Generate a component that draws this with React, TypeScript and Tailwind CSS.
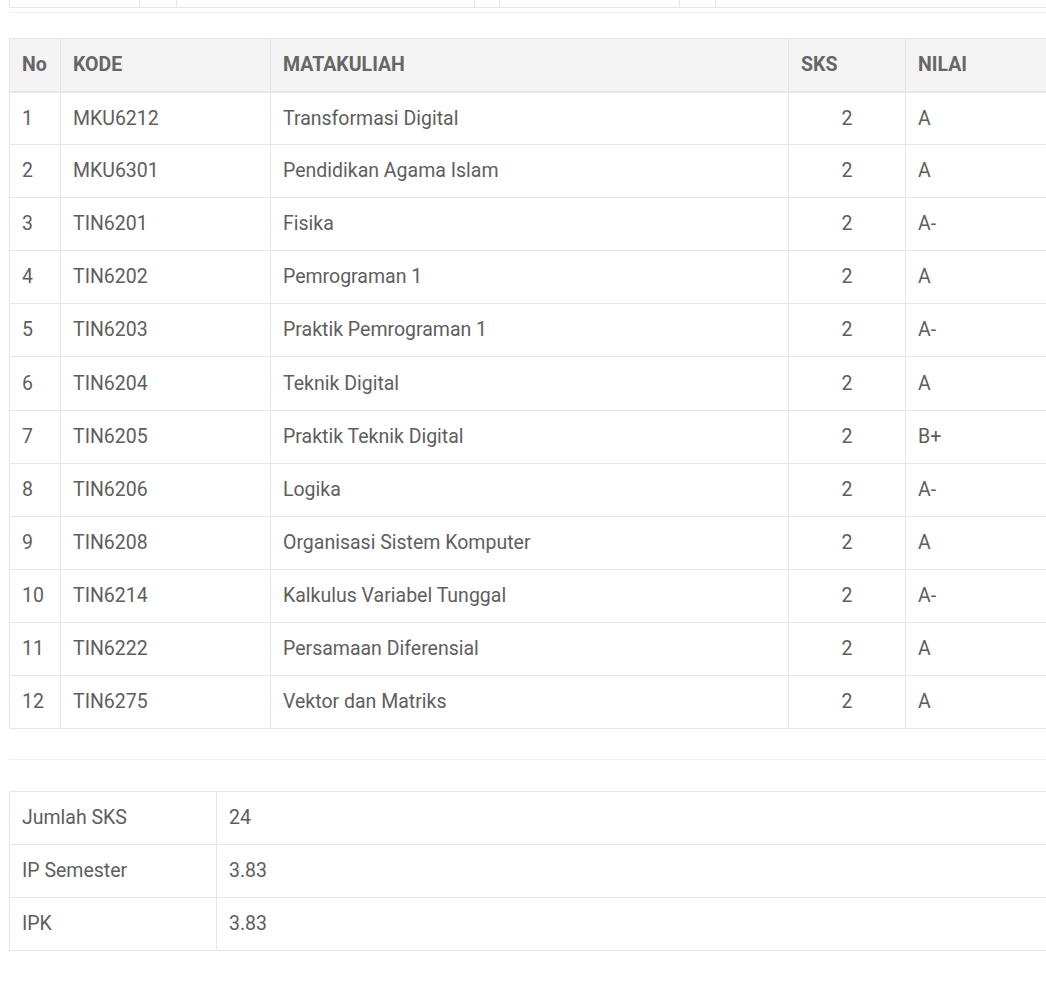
const rows = [
  ['1', 'MKU6212', 'Transformasi Digital', '2', 'A'],
  ['2', 'MKU6301', 'Pendidikan Agama Islam', '2', 'A'],
  ['3', 'TIN6201', 'Fisika', '2', 'A-'],
  ['4', 'TIN6202', 'Pemrograman 1', '2', 'A'],
  ['5', 'TIN6203', 'Praktik Pemrograman 1', '2', 'A-'],
  ['6', 'TIN6204', 'Teknik Digital', '2', 'A'],
  ['7', 'TIN6205', 'Praktik Teknik Digital', '2', 'B+'],
  ['8', 'TIN6206', 'Logika', '2', 'A-'],
  ['9', 'TIN6208', 'Organisasi Sistem Komputer', '2', 'A'],
  ['10', 'TIN6214', 'Kalkulus Variabel Tunggal', '2', 'A-'],
  ['11', 'TIN6222', 'Persamaan Diferensial', '2', 'A'],
  ['12', 'TIN6275', 'Vektor dan Matriks', '2', 'A'],
]

const summary = [
  ['Jumlah SKS', '24'],
  ['IP Semester', '3.83'],
  ['IPK', '3.83'],
]

const cell = 'border border-[#e6e6e6] px-[12px] h-[53px] align-middle'

export default function App() {
  return (
    <div
      className="w-[1046px] h-[990px] overflow-hidden bg-white text-[#5e5e5e] text-[19.5px]"
      style={{ fontFamily: 'Roboto, "Liberation Sans", sans-serif' }}
    >
      <div className="pl-[9px]">
        {/* bottom edge of the table above */}
        <div className="flex h-[8px] border-b border-l border-[#e6e6e6] w-[1100px]">
          <div className="w-[130px] border-r border-[#e6e6e6]" />
          <div className="w-[37px] border-r border-[#e6e6e6]" />
          <div className="w-[298px] border-r border-[#e6e6e6]" />
          <div className="w-[25px] border-r border-[#e6e6e6]" />
          <div className="w-[180px] border-r border-[#e6e6e6]" />
          <div className="w-[36px] border-r border-[#e6e6e6]" />
        </div>
        <div className="mt-[4px] border-t border-[#f0f0f0] w-[1100px]" />

        <table className="mt-[25px] w-[1100px] border-collapse table-fixed">
          <colgroup>
            <col className="w-[51px]" />
            <col className="w-[210px]" />
            <col className="w-[518px]" />
            <col className="w-[117px]" />
            <col />
          </colgroup>
          <thead>
            <tr className="bg-[#f4f4f4] font-bold text-[#666]">
              <th className={`${cell} text-left border-b-2`}>No</th>
              <th className={`${cell} text-left border-b-2`}>KODE</th>
              <th className={`${cell} text-left border-b-2`}>MATAKULIAH</th>
              <th className={`${cell} text-left border-b-2`}>SKS</th>
              <th className={`${cell} text-left border-b-2`}>NILAI</th>
            </tr>
          </thead>
          <tbody>
            {rows.map((r, i) => (
              <tr key={r[0]} className={i === 5 ? 'h-[54px]' : ''}>
                <td className={cell}>{r[0]}</td>
                <td className={cell}>{r[1]}</td>
                <td className={cell}>{r[2]}</td>
                <td className={`${cell} text-center`}>{r[3]}</td>
                <td className={cell}>{r[4]}</td>
              </tr>
            ))}
          </tbody>
        </table>

        <div className="mt-[30px] border-t border-[#f0f0f0] w-[1100px]" />

        <table className="mt-[31px] w-[1100px] border-collapse table-fixed">
          <colgroup>
            <col className="w-[207px]" />
            <col />
          </colgroup>
          <tbody>
            {summary.map((s) => (
              <tr key={s[0]}>
                <td className={cell}>{s[0]}</td>
                <td className={cell}>{s[1]}</td>
              </tr>
            ))}
          </tbody>
        </table>
      </div>
    </div>
  )
}
